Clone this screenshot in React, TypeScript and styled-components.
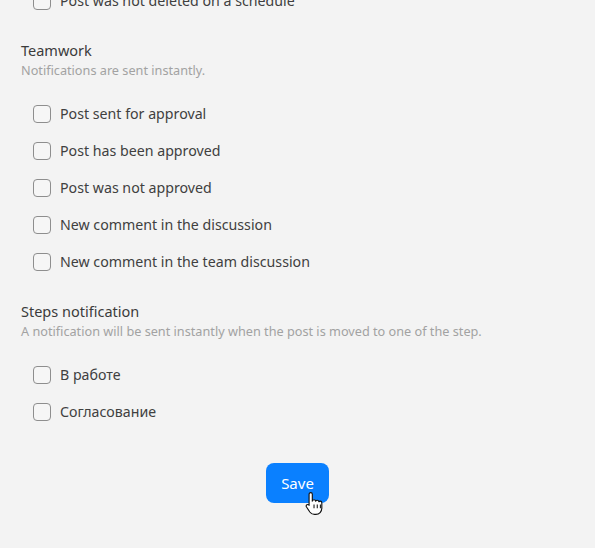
import { FC } from "react";
import styled, { createGlobalStyle } from "styled-components";

const GlobalStyle = createGlobalStyle`
  html, body {
    margin: 0;
    padding: 0;
    background: #f3f3f3;
    overflow: hidden;
  }
  body {
    font-family: "Noto Sans", "Open Sans", sans-serif;
  }
`;

const Page = styled.div`
  width: 595px;
  height: 548px;
  overflow: hidden;
  background: #f3f3f3;
`;

const Content = styled.div`
  display: flex;
  flex-direction: column;
  margin-top: -18px;
  padding: 0 21px;
`;

const Section = styled.div`
  display: flex;
  flex-direction: column;
  margin-top: 21px;
`;

const Title = styled.div`
  font-size: 14.5px;
  line-height: 20px;
  color: #3b3b3b;
`;

const Subtitle = styled.div`
  margin-top: 2px;
  font-size: 12.7px;
  line-height: 17px;
  color: #a2a2a2;
`;

const List = styled.div<{ $offset?: number }>`
  display: flex;
  flex-direction: column;
  padding-left: 12px;
  margin-top: ${(p) => p.$offset ?? 0}px;
`;

const Row = styled.label`
  display: flex;
  align-items: center;
  gap: 9px;
  height: 37px;
  font-size: 14.2px;
  color: #404040;
  cursor: pointer;
`;

const Box = styled.span`
  box-sizing: border-box;
  width: 18px;
  height: 18px;
  border: 1.5px solid #8e8e8e;
  border-radius: 4px;
  background: #f6f6f6;
  flex-shrink: 0;
`;

const Footer = styled.div`
  display: flex;
  justify-content: center;
  margin-top: 33px;
`;

const ButtonWrap = styled.div`
  position: relative;
`;

const SaveButton = styled.button`
  width: 63px;
  height: 40px;
  padding: 0;
  border: none;
  border-radius: 8px;
  background: #0a80ff;
  color: #fff;
  font-family: "Noto Sans", "Open Sans", sans-serif;
  font-size: 15px;
  cursor: pointer;
`;

const Cursor = styled.svg`
  position: absolute;
  left: 39px;
  top: 28px;
  pointer-events: none;
`;

const Check: FC<{ label: string }> = ({ label }) => (
  <Row>
    <Box />
    {label}
  </Row>
);

const teamwork = [
  "Post sent for approval",
  "Post has been approved",
  "Post was not approved",
  "New comment in the discussion",
  "New comment in the team discussion",
];

const steps = ["В работе", "Согласование"];

export default function App() {
  return (
    <Page>
      <GlobalStyle />
      <Content>
        <List>
          <Check label="Post was not deleted on a schedule" />
        </List>
        <Section>
          <Title>Teamwork</Title>
          <Subtitle>Notifications are sent instantly.</Subtitle>
          <List $offset={16}>
            {teamwork.map((t) => (
              <Check key={t} label={t} />
            ))}
          </List>
        </Section>
        <Section>
          <Title>Steps notification</Title>
          <Subtitle>
            A notification will be sent instantly when the post is moved to one of the step.
          </Subtitle>
          <List $offset={16}>
            {steps.map((t) => (
              <Check key={t} label={t} />
            ))}
          </List>
        </Section>
        <Footer>
          <ButtonWrap>
            <SaveButton>Save</SaveButton>
            <Cursor width="19" height="25" viewBox="0 0 20 26">
              <path
                d="M6 1.5c1 0 1.7.8 1.7 1.8v7.2c.3-.9 1-1.4 1.8-1.4 1 0 1.6.7 1.7 1.5.3-.6 1-1 1.7-1 .9 0 1.6.7 1.7 1.6.3-.4.8-.7 1.4-.7 1 0 1.7.8 1.7 1.8v5.5c0 3.8-2.6 6.7-6.3 6.7H10c-2.2 0-3.7-.9-4.9-2.6L1.6 16.7c-.5-.8-.3-1.8.4-2.3.8-.5 1.7-.3 2.3.4l0 .1V3.3C4.3 2.3 5 1.5 6 1.5z"
                fill="#fff"
                stroke="#111"
                strokeWidth="1.2"
                strokeLinejoin="round"
              />
              <path d="M9.5 14v4M12.9 14v4M16.2 14v4" stroke="#111" strokeWidth="1.1" />
            </Cursor>
          </ButtonWrap>
        </Footer>
      </Content>
    </Page>
  );
}
